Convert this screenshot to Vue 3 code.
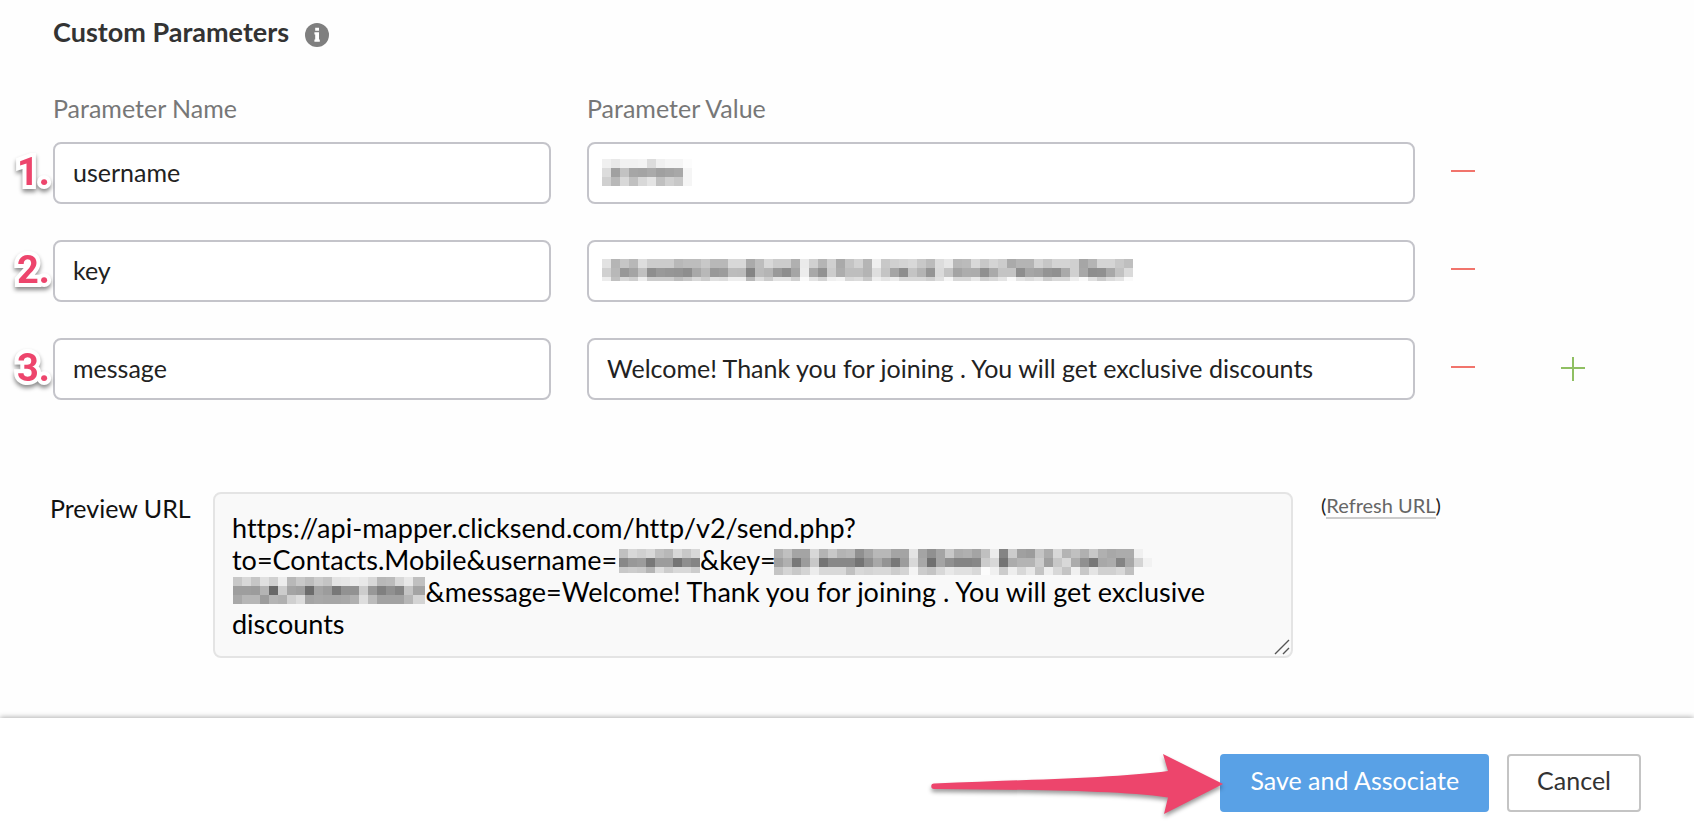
<template>
  <div class="page">
    <main class="content">
      <!-- Section heading -->
      <div class="section-head">
        <h2 class="section-title">Custom Parameters</h2>
        <svg class="info-icon" viewBox="0 0 24 24" role="img" aria-label="Info">
          <circle cx="12" cy="12" r="12" fill="#7f7f7f" />
          <path d="M10.2 4.8h3.8v3h-3.800zM9.400 9.200H14v7.300h.8v2.300H9.400v-2.300h.8v-5h-.8z" fill="#fff" />
        </svg>
      </div>

      <!-- Parameter rows -->
      <section class="params">
        <div class="param-row param-labels">
          <span id="label-name">Parameter Name</span>
          <span id="label-value">Parameter Value</span>
        </div>

        <div v-for="(param, index) in params" :key="index" class="param-row">
          <span class="step">{{ index + 1 }}.</span>
          <input v-model="param.name" class="field" type="text" aria-labelledby="label-name" />
          <div class="value-cell">
            <input v-model="param.value" class="field" type="text" aria-labelledby="label-value" />
            <svg
              v-if="param.mask"
              class="mask"
              :class="'mask-' + param.mask"
              :width="masks[param.mask].width"
              :height="masks[param.mask].height"
              aria-hidden="true"
            >
              <rect
                v-for="(cell, i) in cells(param.mask)"
                :key="i"
                :x="cell.x"
                :y="cell.y"
                width="9"
                height="9"
                :fill="cell.fill"
              />
            </svg>
          </div>
          <div class="actions">
            <button class="icon-btn" type="button" aria-label="Remove parameter" @click="removeParam(index)">
              <svg viewBox="0 0 24 24"><path d="M0 10h24" stroke="#f1746c" stroke-width="2" /></svg>
            </button>
            <button
              v-if="index === params.length - 1"
              class="icon-btn"
              type="button"
              aria-label="Add parameter"
              @click="addParam"
            >
              <svg viewBox="0 0 24 24"><path d="M0 11h24M12 0v24" stroke="#8fbf62" stroke-width="2" /></svg>
            </button>
          </div>
        </div>
      </section>

      <!-- Preview -->
      <section class="preview">
        <label class="preview-label" for="preview-url">Preview URL</label>
        <div class="preview-box">
          <textarea id="preview-url" class="preview-url" readonly :value="previewUrl"></textarea>
          <svg
            v-for="name in ['urlUser', 'urlKey', 'urlKeyEnd']"
            :key="name"
            class="mask"
            :class="'mask-' + name"
            :width="masks[name].width"
            :height="masks[name].height"
            aria-hidden="true"
          >
            <rect
              v-for="(cell, i) in cells(name)"
              :key="i"
              :x="cell.x"
              :y="cell.y"
              width="9"
              height="9"
              :fill="cell.fill"
            />
          </svg>
          <svg class="grip" viewBox="0 0 16 16" aria-hidden="true">
            <path d="M1 15L15 1M9 15l6-6" stroke="#555" stroke-width="1.4" fill="none" />
          </svg>
        </div>
        <div class="refresh">(<a href="#" @click.prevent>Refresh URL</a>)</div>
      </section>
    </main>

    <footer class="footer">
      <div class="save-wrap">
        <button class="btn btn-primary" type="button">Save and Associate</button>
        <svg class="arrow" viewBox="0 0 300 72" aria-hidden="true">
          <path
            d="M8 29.5C94 26 190 24 242 17L237 0L297 30L238 60L242 43.5C190 36 94 36 8 35A2.7 2.7 0 0 1 8 29.5Z"
            fill="#ed456c"
          />
        </svg>
      </div>
      <button class="btn btn-plain" type="button">Cancel</button>
    </footer>
  </div>
</template>

<script setup>
import { ref } from 'vue'

const params = ref([
  { name: 'username', value: '', mask: 'user' },
  { name: 'key', value: '', mask: 'key' },
  { name: 'message', value: 'Welcome! Thank you for joining . You will get exclusive discounts', mask: '' }
])

const addParam = () => {
  params.value.push({ name: '', value: '', mask: '' })
}

const removeParam = (index) => {
  params.value.splice(index, 1)
}

// Hidden parts of the URL are blank space under a mask
const blank = (count) => '\u00a0'.repeat(count)

const previewUrl =
  'https://api-mapper.clicksend.com/http/v2/send.php?\n' +
  'to=Contacts.Mobile&username=' + blank(12) + '&key=\n' +
  blank(28) + '&message=Welcome! Thank you for joining . You will get exclusive discounts'

// Grey levels of each mask, one string per row of 9px cells
const masks = {
  user: {
    width: 90,
    height: 28,
    rows: [
      'f0 e8 f2 f2 f4 dc f0 f5 f5 fc',
      'dc a0 c2 a6 a4 aa a0 a4 a8 f5',
      'd0 b8 d8 c0 d8 e4 c0 d0 c8 f5'
    ]
  },
  key: {
    width: 531,
    height: 22,
    rows: [
      'e2 b5 c6 b8 dd cc cc cc b8 bd bd c8 b8 b8 d8 d8 aa bd d8 cc cc b0 ea d0 b5 d0 aa c4 d2 b5 ef c8 d0 d4 d8 c8 bb dc e6 b8 bb d8 c8 d4 cc aa b4 b4 d2 c6 d4 d4 d0 a6 b4 d4 d4 c8 bf',
      'd0 b8 98 a4 c0 8e 99 96 94 8e a8 b8 98 9c bc bb 84 bb b5 9a 8e a5 ec a8 92 cc ad be be b4 de c4 a5 8e c4 b4 95 da c4 a4 ad ac 90 aa c4 c4 8e a6 a2 94 90 aa d0 a8 8e 90 a8 c2 da',
      'ec c0 d8 ce ee cc cc cc bd c8 d8 cc e0 dd ee ee b8 dd cc e4 e4 d0 fa e4 d4 f0 f4 d8 dc c8 ee e4 ec d8 d8 d8 d0 e0 f6 d8 d8 e8 d0 d8 e4 fa e4 dc e4 cc d8 d8 ee fa e0 cc dc e4 fa'
    ]
  },
  urlUser: {
    width: 81,
    height: 24,
    rows: [
      'c0 d8 d0 d8 c0 b8 d8 c8 d8',
      '88 98 9c 78 9c 9c 74 8e 84',
      'c8 cc c8 b4 dd cc d8 d8 cc'
    ]
  },
  urlKey: {
    width: 378,
    height: 26,
    rows: [
      'b0 c0 a4 a4 d8 b4 c8 b4 b8 90 a4 b8 b8 a4 a4 e4 a4 90 a4 c8 ac b0 a4 c0 ec 84 cc a0 9c c4 ac d8 b4 c0 b0 c8 b0 a8 ac ac f0 f9',
      'a0 b0 78 9c c8 74 88 88 88 74 90 a8 94 78 9c d8 a8 70 a4 90 84 84 88 cc d8 74 ac b4 b4 cc a0 c8 d8 ac 90 78 a8 ac 84 a8 d4 f2',
      'c4 d4 c8 d4 ec d8 d8 d8 c0 d8 d4 d8 d8 cc d4 f4 cc c4 d8 e8 e0 e0 d8 fc f0 cc ee d8 e8 c4 ee d8 c4 f0 c8 e4 d0 d0 d8 c0 f9 f9'
    ]
  },
  urlKeyEnd: {
    width: 192,
    height: 27,
    rows: [
      'c8 d8 c6 e0 d0 ec b8 c8 bd cc c4 e4 e6 ec e8 d8 b8 bb d8 e8 c0 c0',
      '9e 9e 9c b4 68 cc a4 a0 6c a4 9c 78 92 92 cc 98 80 90 84 c4 a4 a4',
      'a8 b6 b6 9c b4 b0 d0 dc a4 a8 a6 a6 a8 b0 dd bb a2 a2 a2 b6 d4 d4'
    ]
  }
}

const cells = (name) =>
  masks[name].rows.flatMap((row, y) =>
    row.split(' ').map((level, x) => ({ x: x * 9, y: y * 9, fill: '#' + level.repeat(3) }))
  )
</script>

<style>
body {
  background-color: #fefefe;
}
</style>

<style scoped>
.page {
  display: flex;
  flex-direction: column;
  min-height: 100vh;
  box-sizing: border-box;
  color: #222222;
  font-family: Lato, sans-serif;
  font-size: 25px;
  line-height: 32px;
  overflow-x: hidden;
}

.content {
  flex: 1;
  padding: 16px 53px 32px;
}

/* Heading */
.section-head {
  display: flex;
  align-items: center;
  gap: 16px;
}

.section-title {
  margin: 0;
  color: #333333;
  font-size: 27px;
  font-weight: bold;
  line-height: 32px;
}

.info-icon {
  width: 24px;
  height: 24px;
  margin-top: 6px;
}

/* Parameter rows */
.params {
  display: flex;
  flex-direction: column;
  gap: 36px;
  margin-top: 44px;
}

.param-row {
  position: relative;
  display: grid;
  grid-template-columns: minmax(0, 498fr) minmax(0, 828fr) 190px;
  column-gap: 36px;
  align-items: center;
}

.param-labels {
  margin-bottom: -18px;
  color: #777777;
}

.step {
  position: absolute;
  left: -36px;
  top: 10px;
  color: #ed456c;
  font-family: Roboto, sans-serif;
  font-size: 38px;
  font-weight: bold;
  line-height: 40px;
  -webkit-text-stroke: 8px #ffffff;
  stroke-linejoin: round;
  paint-order: stroke fill;
  filter: drop-shadow(0 3px 2px rgba(0, 0, 0, 0.45));
}

.field {
  display: block;
  width: 100%;
  height: 62px;
  box-sizing: border-box;
  padding: 0 18px 2px;
  border: 2px solid #c4c4ca;
  border-radius: 8px;
  background-color: #ffffff;
  color: #222222;
  font-family: inherit;
  font-size: 25px;
  font-variant-ligatures: none;
  outline: none;
}

.value-cell {
  position: relative;
}

.mask {
  position: absolute;
}

.mask-user {
  left: 15px;
  top: 17px;
}

.mask-key {
  left: 15px;
  top: 19px;
}

.actions {
  display: flex;
  gap: 86px;
}

.icon-btn {
  width: 24px;
  height: 24px;
  padding: 0;
  border: none;
  background: none;
  cursor: pointer;
}

.icon-btn svg {
  display: block;
}

/* Preview */
.preview {
  display: grid;
  grid-template-columns: 163px minmax(0, 1fr) 348px;
  margin-top: 92px;
  margin-left: -3px;
}

.preview-label {
  color: #111111;
}

.preview-box {
  position: relative;
}

.preview-url {
  display: block;
  width: 100%;
  height: 166px;
  box-sizing: border-box;
  padding: 18px 17px;
  border: 2px solid #e4e4e4;
  border-radius: 8px;
  background-color: #f9f9f9;
  color: #000000;
  font-family: inherit;
  font-size: 27px;
  font-variant-ligatures: none;
  line-height: 32px;
  resize: none;
  overflow: hidden;
  outline: none;
}

.mask-urlUser {
  left: 406px;
  top: 57px;
}

.mask-urlKey {
  left: 561px;
  top: 57px;
}

.mask-urlKeyEnd {
  left: 20px;
  top: 85px;
}

.grip {
  position: absolute;
  right: 3px;
  bottom: 3px;
  width: 16px;
  height: 16px;
}

.refresh {
  padding-left: 28px;
  color: #222222;
  font-size: 20px;
  line-height: 26px;
}

.refresh a {
  border-bottom: 2px solid #cccccc;
  color: #666666;
  text-decoration: none;
}

/* Footer */
.footer {
  display: flex;
  justify-content: flex-end;
  gap: 18px;
  padding: 36px 53px 22px;
  background-color: #ffffff;
  box-shadow: 0 -1px 5px rgba(0, 0, 0, 0.3);
}

.save-wrap {
  position: relative;
}

.btn {
  height: 58px;
  padding: 0 28px 6px;
  border: 2px solid #c4c4c4;
  border-radius: 4px;
  background-color: #ffffff;
  color: #333333;
  font-family: inherit;
  font-size: 25px;
  cursor: pointer;
}

.btn-primary {
  border-color: #59a1e6;
  background-color: #59a1e6;
  color: #ffffff;
}

.arrow {
  position: absolute;
  right: calc(100% - 6px);
  top: 0;
  width: 300px;
  height: 72px;
  overflow: visible;
  filter: drop-shadow(0 3px 2px rgba(0, 0, 0, 0.4));
}
</style>
